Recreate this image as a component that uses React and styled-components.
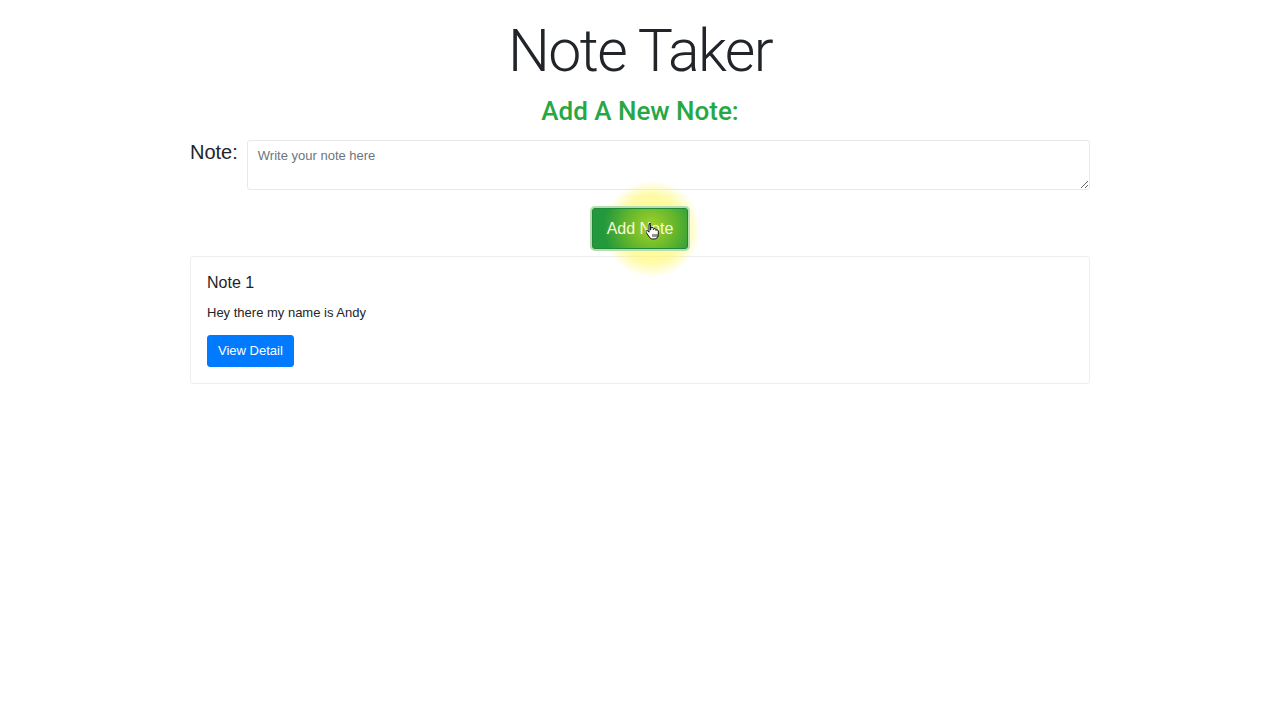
import styled, { createGlobalStyle } from 'styled-components';

const GlobalStyle = createGlobalStyle`
    body {
        margin: 0;
        background: #fff;
        font-family: "Liberation Sans", Arial, sans-serif;
        color: #212529;
    }
`;

const Page = styled.div`
    width: 900px;
    margin: 0 auto;
    padding-top: 18px;
`;

const Title = styled.h1`
    margin: 0;
    text-align: center;
    font-family: Roboto, "Liberation Sans", sans-serif;
    font-weight: 300;
    font-size: 59px;
    letter-spacing: -1.6px;
    line-height: 66px;
    color: #212529;
`;

const SubTitle = styled.h2`
    margin: 10px 0 12px;
    text-align: center;
    font-family: Roboto, "Liberation Sans", sans-serif;
    font-size: 26px;
    font-weight: 500;
    line-height: 34px;
    color: #28a745;
`;

const NoteRow = styled.div`
    display: flex;
    align-items: flex-start;
    gap: 9px;
`;

const Label = styled.label`
    font-size: 20px;
    line-height: 24px;
    color: #212529;
`;

const TextArea = styled.textarea`
    flex: 1;
    height: 50px;
    box-sizing: border-box;
    padding: 7px 10px;
    border: 1px solid #e6e8ea;
    border-radius: 3px;
    font-family: "Liberation Sans", Arial, sans-serif;
    font-size: 13px;
    color: #495057;
    resize: vertical;
    outline: none;
    &::placeholder {
        color: #6c757d;
    }
`;

const Center = styled.div`
    display: flex;
    justify-content: center;
    padding: 18px 0 7px;
`;

const ButtonWrap = styled.div`
    position: relative;
`;

const Highlight = styled.div`
    position: absolute;
    left: 12px;
    top: -27px;
    width: 96px;
    height: 96px;
    border-radius: 50%;
    background: radial-gradient(circle, rgba(255, 248, 90, 0.8) 0%, rgba(255, 248, 110, 0.6) 50%, rgba(255, 252, 180, 0) 72%);
    pointer-events: none;
`;

const Button = styled.button`
    position: relative;
    display: inline-flex;
    align-items: center;
    justify-content: center;
    border: 1px solid ${(p) => p.$border};
    border-radius: 3px;
    background: ${(p) => p.$bg};
    color: #fff;
    font-family: "Liberation Sans", Arial, sans-serif;
    font-size: ${(p) => p.$size}px;
    line-height: 1.2;
    padding: ${(p) => p.$pad};
    cursor: pointer;
`;

const AddButton = styled(Button)`
    overflow: hidden;
    box-shadow: 0 0 0 2px #b6dcb4;
`;

const ButtonGlow = styled.span`
    position: absolute;
    left: 10px;
    top: -30px;
    width: 96px;
    height: 96px;
    border-radius: 50%;
    background: radial-gradient(circle, rgba(170, 215, 40, 0.95) 0%, rgba(120, 190, 40, 0.7) 40%, rgba(40, 160, 60, 0) 70%);
`;

const ButtonText = styled.span`
    position: relative;
    color: #f8f8dc;
`;

const Cursor = styled.svg`
    position: absolute;
    left: 54px;
    top: 14px;
`;

const Card = styled.div`
    border: 1px solid #eceef0;
    border-radius: 3px;
    padding: 16px;
`;

const CardTitle = styled.h5`
    margin: 0 0 11px;
    font-size: 16px;
    font-weight: 400;
    line-height: 20px;
    color: #212529;
`;

const CardText = styled.p`
    margin: 0 0 13px;
    font-size: 13px;
    line-height: 18px;
    color: #212529;
`;

function App() {
    return (
        <>
            <GlobalStyle />
            <Page>
                <Title>Note Taker</Title>
                <SubTitle>Add A New Note:</SubTitle>
                <NoteRow>
                    <Label>Note:</Label>
                    <TextArea placeholder="Write your note here" />
                </NoteRow>
                <Center>
                    <ButtonWrap>
                        <Highlight />
                        <AddButton $bg="#22993c" $border="#1e8a36" $size={16} $pad="10px 14px">
                            <ButtonGlow />
                            <ButtonText>Add Note</ButtonText>
                        </AddButton>
                        <Cursor width="16" height="18" viewBox="0 0 16 18">
                            <path d="M4 1.5c.8 0 1.4.6 1.4 1.4V8l.3-.1V6.6c0-.8.6-1.3 1.3-1.3s1.3.6 1.3 1.3v1l.2-.1c.2-.6.7-.9 1.3-.9.7 0 1.2.5 1.2 1.2v.6c.2-.4.6-.6 1.1-.6.7 0 1.2.5 1.2 1.2v3.6c0 2.7-1.8 4.4-4.3 4.4H7.7c-1.5 0-2.4-.7-3.3-1.900L1.2 10.5c-.4-.6-.3-1.3.2-1.7.5-.4 1.2-.3 1.6.2l1 1.2V2.9c0-.8.6-1.4 1.4-1.4z" fill="#fff" stroke="#111" strokeWidth="1" transform="translate(-1 0)" />
                            <path d="M7 12v3M9 12v3M11 12v3" stroke="#111" strokeWidth="0.9" />
                        </Cursor>
                    </ButtonWrap>
                </Center>
                <Card>
                    <CardTitle>Note 1</CardTitle>
                    <CardText>Hey there my name is Andy</CardText>
                    <Button $bg="#007bff" $border="#007bff" $size={13} $pad="7px 10px">View Detail</Button>
                </Card>
            </Page>
        </>
    );
}

export default App;
